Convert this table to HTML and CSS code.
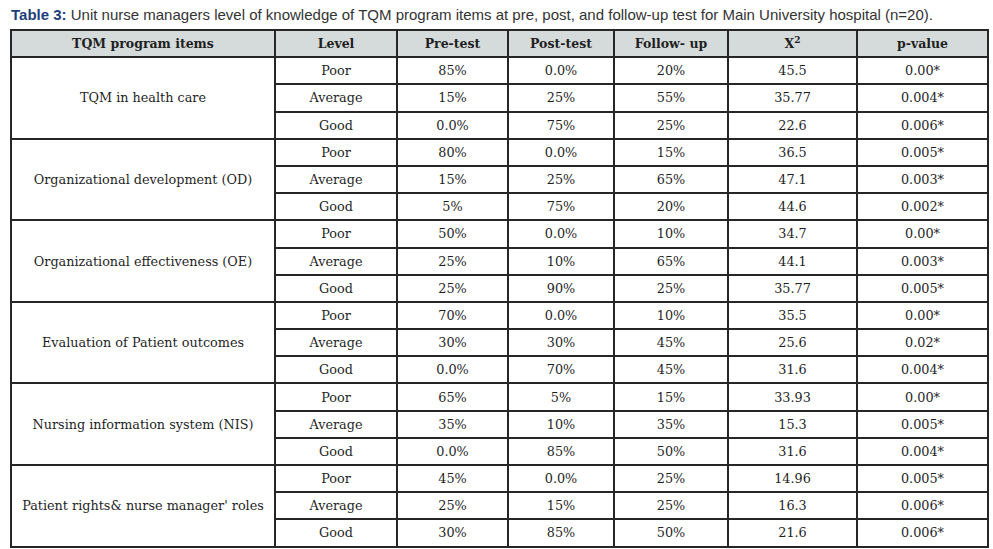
FILE: index.html
```html
<!DOCTYPE html>
<html>
<head>
<meta charset="utf-8">
<link rel="stylesheet" href="styles.css">
</head>
<body>
<p class="caption"><span class="label">Table 3:</span> Unit nurse managers level of knowledge of TQM program items at pre, post, and follow-up test for Main University hospital (n=20).</p>
<table class="data">
<colgroup>
<col class="c1"><col class="c2"><col class="c3"><col class="c4"><col class="c5"><col class="c6"><col class="c7">
</colgroup>
<thead>
<tr><th>TQM program items</th><th>Level</th><th>Pre-test</th><th>Post-test</th><th>Follow- up</th><th>X<sup>2</sup></th><th>p-value</th></tr>
</thead>
<tbody>
<tr><td rowspan="3">TQM in health care</td><td>Poor</td><td>85%</td><td>0.0%</td><td>20%</td><td>45.5</td><td>0.00*</td></tr>
<tr><td>Average</td><td>15%</td><td>25%</td><td>55%</td><td>35.77</td><td>0.004*</td></tr>
<tr><td>Good</td><td>0.0%</td><td>75%</td><td>25%</td><td>22.6</td><td>0.006*</td></tr>
<tr><td rowspan="3">Organizational development (OD)</td><td>Poor</td><td>80%</td><td>0.0%</td><td>15%</td><td>36.5</td><td>0.005*</td></tr>
<tr><td>Average</td><td>15%</td><td>25%</td><td>65%</td><td>47.1</td><td>0.003*</td></tr>
<tr><td>Good</td><td>5%</td><td>75%</td><td>20%</td><td>44.6</td><td>0.002*</td></tr>
<tr><td rowspan="3">Organizational effectiveness (OE)</td><td>Poor</td><td>50%</td><td>0.0%</td><td>10%</td><td>34.7</td><td>0.00*</td></tr>
<tr><td>Average</td><td>25%</td><td>10%</td><td>65%</td><td>44.1</td><td>0.003*</td></tr>
<tr><td>Good</td><td>25%</td><td>90%</td><td>25%</td><td>35.77</td><td>0.005*</td></tr>
<tr><td rowspan="3">Evaluation of Patient outcomes</td><td>Poor</td><td>70%</td><td>0.0%</td><td>10%</td><td>35.5</td><td>0.00*</td></tr>
<tr><td>Average</td><td>30%</td><td>30%</td><td>45%</td><td>25.6</td><td>0.02*</td></tr>
<tr><td>Good</td><td>0.0%</td><td>70%</td><td>45%</td><td>31.6</td><td>0.004*</td></tr>
<tr><td rowspan="3">Nursing information system (NIS)</td><td>Poor</td><td>65%</td><td>5%</td><td>15%</td><td>33.93</td><td>0.00*</td></tr>
<tr><td>Average</td><td>35%</td><td>10%</td><td>35%</td><td>15.3</td><td>0.005*</td></tr>
<tr><td>Good</td><td>0.0%</td><td>85%</td><td>50%</td><td>31.6</td><td>0.004*</td></tr>
<tr><td rowspan="3">Patient rights&amp; nurse manager' roles</td><td>Poor</td><td>45%</td><td>0.0%</td><td>25%</td><td>14.96</td><td>0.005*</td></tr>
<tr><td>Average</td><td>25%</td><td>15%</td><td>25%</td><td>16.3</td><td>0.006*</td></tr>
<tr><td>Good</td><td>30%</td><td>85%</td><td>50%</td><td>21.6</td><td>0.006*</td></tr>
</tbody>
</table>
</body>
</html>
```
FILE: styles.css
```css
html, body {
  margin: 0;
  padding: 0;
  background: #ffffff;
}
body {
  padding: 0 0 0 10px;
}
.caption {
  margin: 0;
  padding: 6px 0 0 1px;
  height: 23px;
  font-family: "Liberation Sans", Arial, sans-serif;
  font-size: 15px;
  line-height: 17px;
  color: #333333;
  white-space: nowrap;
}
.caption .label {
  color: #1e3f7a;
  font-weight: bold;
}
.data {
  border-collapse: collapse;
  table-layout: fixed;
  width: 977px;
  font-family: "DejaVu Serif", serif;
  font-size: 12.8px;
  color: #1f1f1f;
}
.c1 { width: 264px; }
.c2 { width: 122px; }
.c3 { width: 111px; }
.c4 { width: 106px; }
.c5 { width: 114px; }
.c6 { width: 129px; }
.c7 { width: 131px; }
.data th, .data td {
  border: 2px solid #262626;
  text-align: center;
  vertical-align: middle;
  padding: 0;
  height: 25.2px;
}
.data th {
  background: #d5dbdb;
  font-weight: bold;
  font-size: 12.5px;
}
.data sup {
  font-size: 9px;
  line-height: 0;
}
```
